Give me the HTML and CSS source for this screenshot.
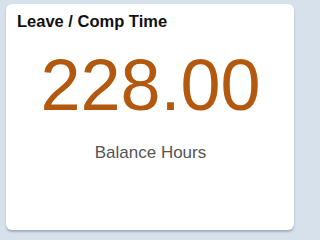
FILE: index.html
```html
<!DOCTYPE html>
<html>
<head>
<meta charset="utf-8">
<link rel="stylesheet" href="styles.css">
</head>
<body>
<div class="card">
  <h2 class="title">Leave / Comp Time</h2>
  <div class="value">228.00</div>
  <div class="label">Balance Hours</div>
</div>
</body>
</html>
```
FILE: styles.css
```css
html, body {
  margin: 0;
  padding: 0;
  background: #d6e1eb;
}
body {
  width: 298px;
  height: 236px;
  padding: 4px 4px 6px 6px;
  box-sizing: border-box;
  overflow: hidden;
  font-family: "Liberation Sans", Arial, sans-serif;
}
.card {
  background: #ffffff;
  border-radius: 6px;
  height: 226px;
  box-sizing: border-box;
  padding: 8px 10px 0 11px;
  box-shadow: 0 2px 2px rgba(120, 135, 170, 0.55);
  display: flex;
  flex-direction: column;
}
.title {
  margin: 0;
  font-size: 16.5px;
  font-weight: bold;
  color: #111;
  line-height: 19px;
}
.value {
  margin-top: 18px;
  text-align: center;
  font-size: 72px;
  line-height: 72px;
  color: #b3580f;
}
.label {
  margin-top: 22px;
  text-align: center;
  font-size: 17px;
  line-height: 20px;
  color: #555;
}
```
